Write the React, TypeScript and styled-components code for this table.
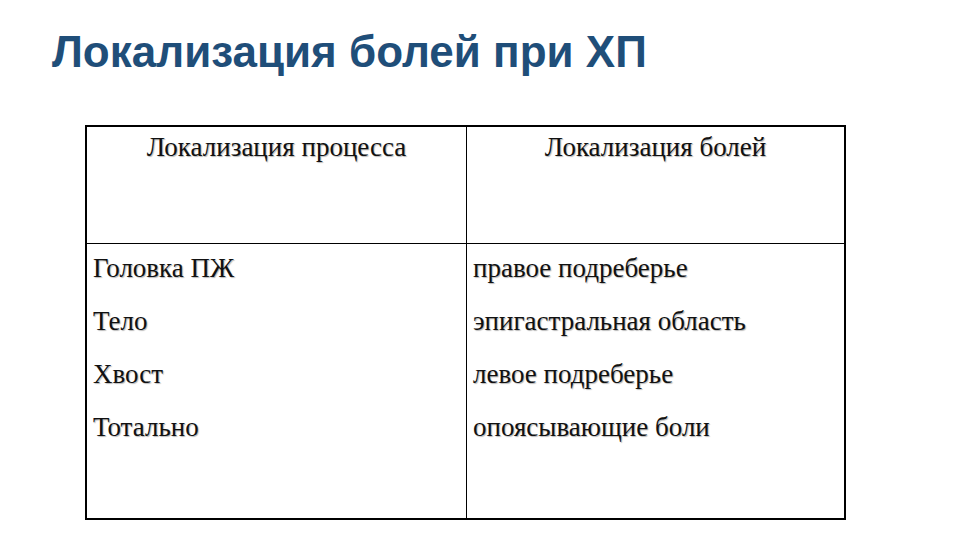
import styled, { createGlobalStyle } from 'styled-components';

const GlobalStyle = createGlobalStyle`
  html, body {
    margin: 0;
    padding: 0;
    background: #ffffff;
  }
`;

const Slide = styled.div`
  width: 960px;
  height: 540px;
  box-sizing: border-box;
  padding: 25px 0 0 52px;
  background: #ffffff;
  overflow: hidden;
`;

const Title = styled.h1`
  margin: 0;
  font-family: 'Liberation Sans', Arial, sans-serif;
  font-weight: bold;
  font-size: 44px;
  line-height: 54px;
  color: #1f4e79;
`;

const Table = styled.div`
  margin: 46px 0 0 33px;
  width: 761px;
  height: 395px;
  box-sizing: border-box;
  border: 2px solid #000;
  display: grid;
  grid-template-columns: 380px 1fr;
  grid-template-rows: 117px 1fr;
`;

const Cell = styled.div<{ $head?: boolean; $right?: boolean }>`
  box-sizing: border-box;
  border-right: ${(p) => (p.$right ? 'none' : '1px solid #000')};
  border-bottom: ${(p) => (p.$head ? '1px solid #000' : 'none')};
  padding: ${(p) => (p.$head ? '5px 0 0 0' : '9px 0 0 6px')};
  text-align: ${(p) => (p.$head ? 'center' : 'left')};
  font-family: 'Liberation Serif', 'Times New Roman', serif;
  font-size: 27px;
  line-height: 30px;
  color: #111;
  text-shadow: 1px 1px 1px #b8b8b8;
`;

const Line = styled.div`
  height: 53px;
`;

const left = ['Головка ПЖ', 'Тело', 'Хвост', 'Тотально'];
const right = ['правое подреберье', 'эпигастральная область', 'левое подреберье', 'опоясывающие боли'];

export default function App() {
  return (
    <>
      <GlobalStyle />
      <Slide>
        <Title>Локализация болей при ХП</Title>
        <Table>
          <Cell $head>Локализация процесса</Cell>
          <Cell $head $right>Локализация болей</Cell>
          <Cell>
            {left.map((t) => (
              <Line key={t}>{t}</Line>
            ))}
          </Cell>
          <Cell $right>
            {right.map((t) => (
              <Line key={t}>{t}</Line>
            ))}
          </Cell>
        </Table>
      </Slide>
    </>
  );
}
